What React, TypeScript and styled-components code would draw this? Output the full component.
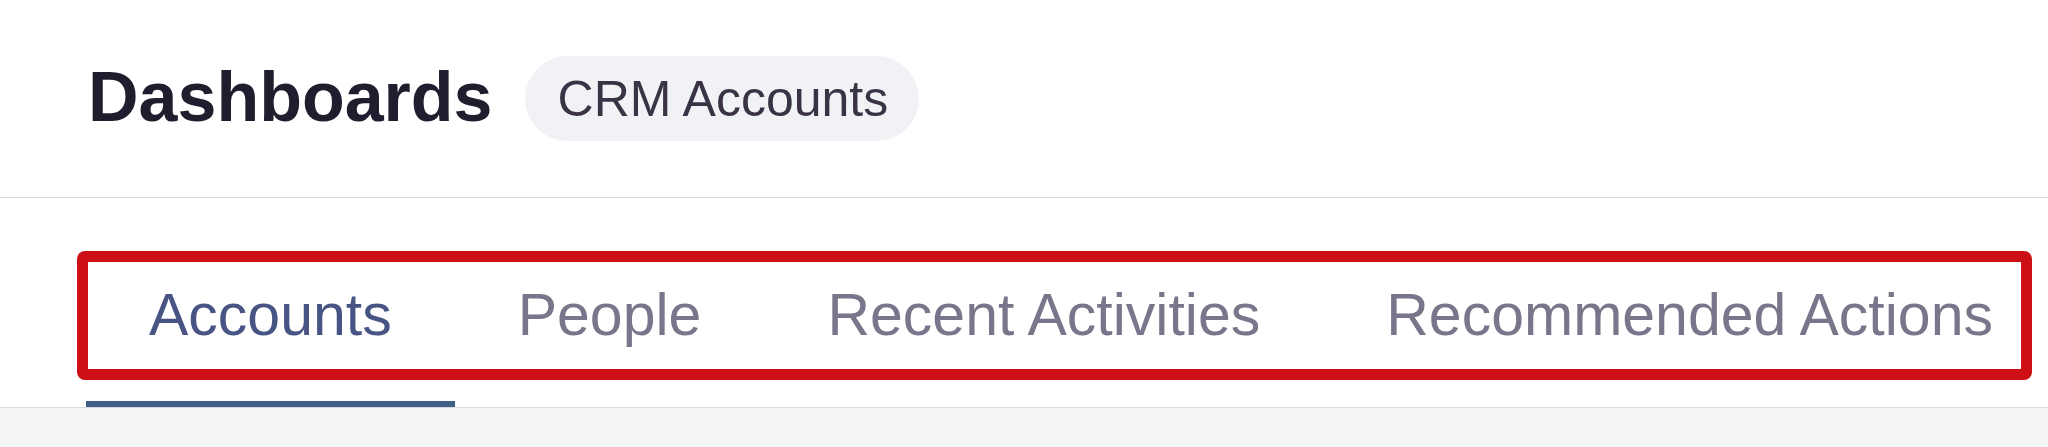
import React from 'react';
import { useState } from 'react';
import styled, { createGlobalStyle } from 'styled-components';

const GlobalStyle = createGlobalStyle`
    html, body {
        margin: 0;
        padding: 0;
        background: #ffffff;
        font-family: "Liberation Sans", Arial, sans-serif;
    }
`;

const Page = styled.div`
    display: flex;
    flex-direction: column;
    min-height: 447px;
    background: #ffffff;
`;

const Header = styled.header`
    display: flex;
    align-items: center;
    gap: 32px;
    height: 197px;
    padding-left: 88px;
    border-bottom: 1px solid #d9d9dc;
    box-sizing: content-box;
`;

const Title = styled.h1`
    margin: 0;
    margin-top: -4px;
    font-size: 70px;
    font-weight: 700;
    color: #201e2e;
    letter-spacing: 0;
`;

const Pill = styled.span`
    display: inline-flex;
    align-items: center;
    height: 85px;
    padding: 0 31px 0 33px;
    border-radius: 43px;
    background: #f1f2f5;
    color: #3a3346;
    font-size: 50px;
`;

const TabSection = styled.nav`
    position: relative;
    padding-top: 66px;
    border-bottom: 1px solid #d6d9de;
`;

const TabList = styled.div`
    display: flex;
    padding-left: 86px;
`;

type TabProps = {
    active: boolean;
}
const Tab = styled.button<TabProps>`
    margin: 0;
    padding: 16px 63px 51px;
    border: none;
    border-bottom: 6px solid ${(props) => (props.active ? "#3f5f86" : "transparent")};
    background: none;
    font-family: "Liberation Sans", Arial, sans-serif;
    font-size: 59px;
    line-height: 70px;
    white-space: nowrap;
    color: ${(props) => (props.active ? "#485483" : "#78768a")};
    cursor: pointer;
`;

// marco rojo de anotacion encima de las pestañas
const Highlight = styled.div`
    position: absolute;
    top: 53px;
    left: 77px;
    width: 1955px;
    height: 129px;
    box-sizing: border-box;
    border: 11px solid #cc1016;
    border-radius: 8px;
    pointer-events: none;
`;

const Content = styled.main`
    flex: 1;
    background: #f3f4f6;
`;

const tabs = ["Accounts", "People", "Recent Activities", "Recommended Actions"];

const App = () => {
    const [activo, setActivo] = useState<string>("Accounts");

    return (
        <>
            <GlobalStyle />
            <Page>
                <Header>
                    <Title>Dashboards</Title>
                    <Pill>CRM Accounts</Pill>
                </Header>
                <TabSection>
                    <TabList>
                        {tabs.map((t) => (
                            <Tab key={t} active={activo === t} onClick={() => setActivo(t)}>
                                {t}
                            </Tab>
                        ))}
                    </TabList>
                    <Highlight />
                </TabSection>
                <Content />
            </Page>
        </>
    );
}

export default App;
